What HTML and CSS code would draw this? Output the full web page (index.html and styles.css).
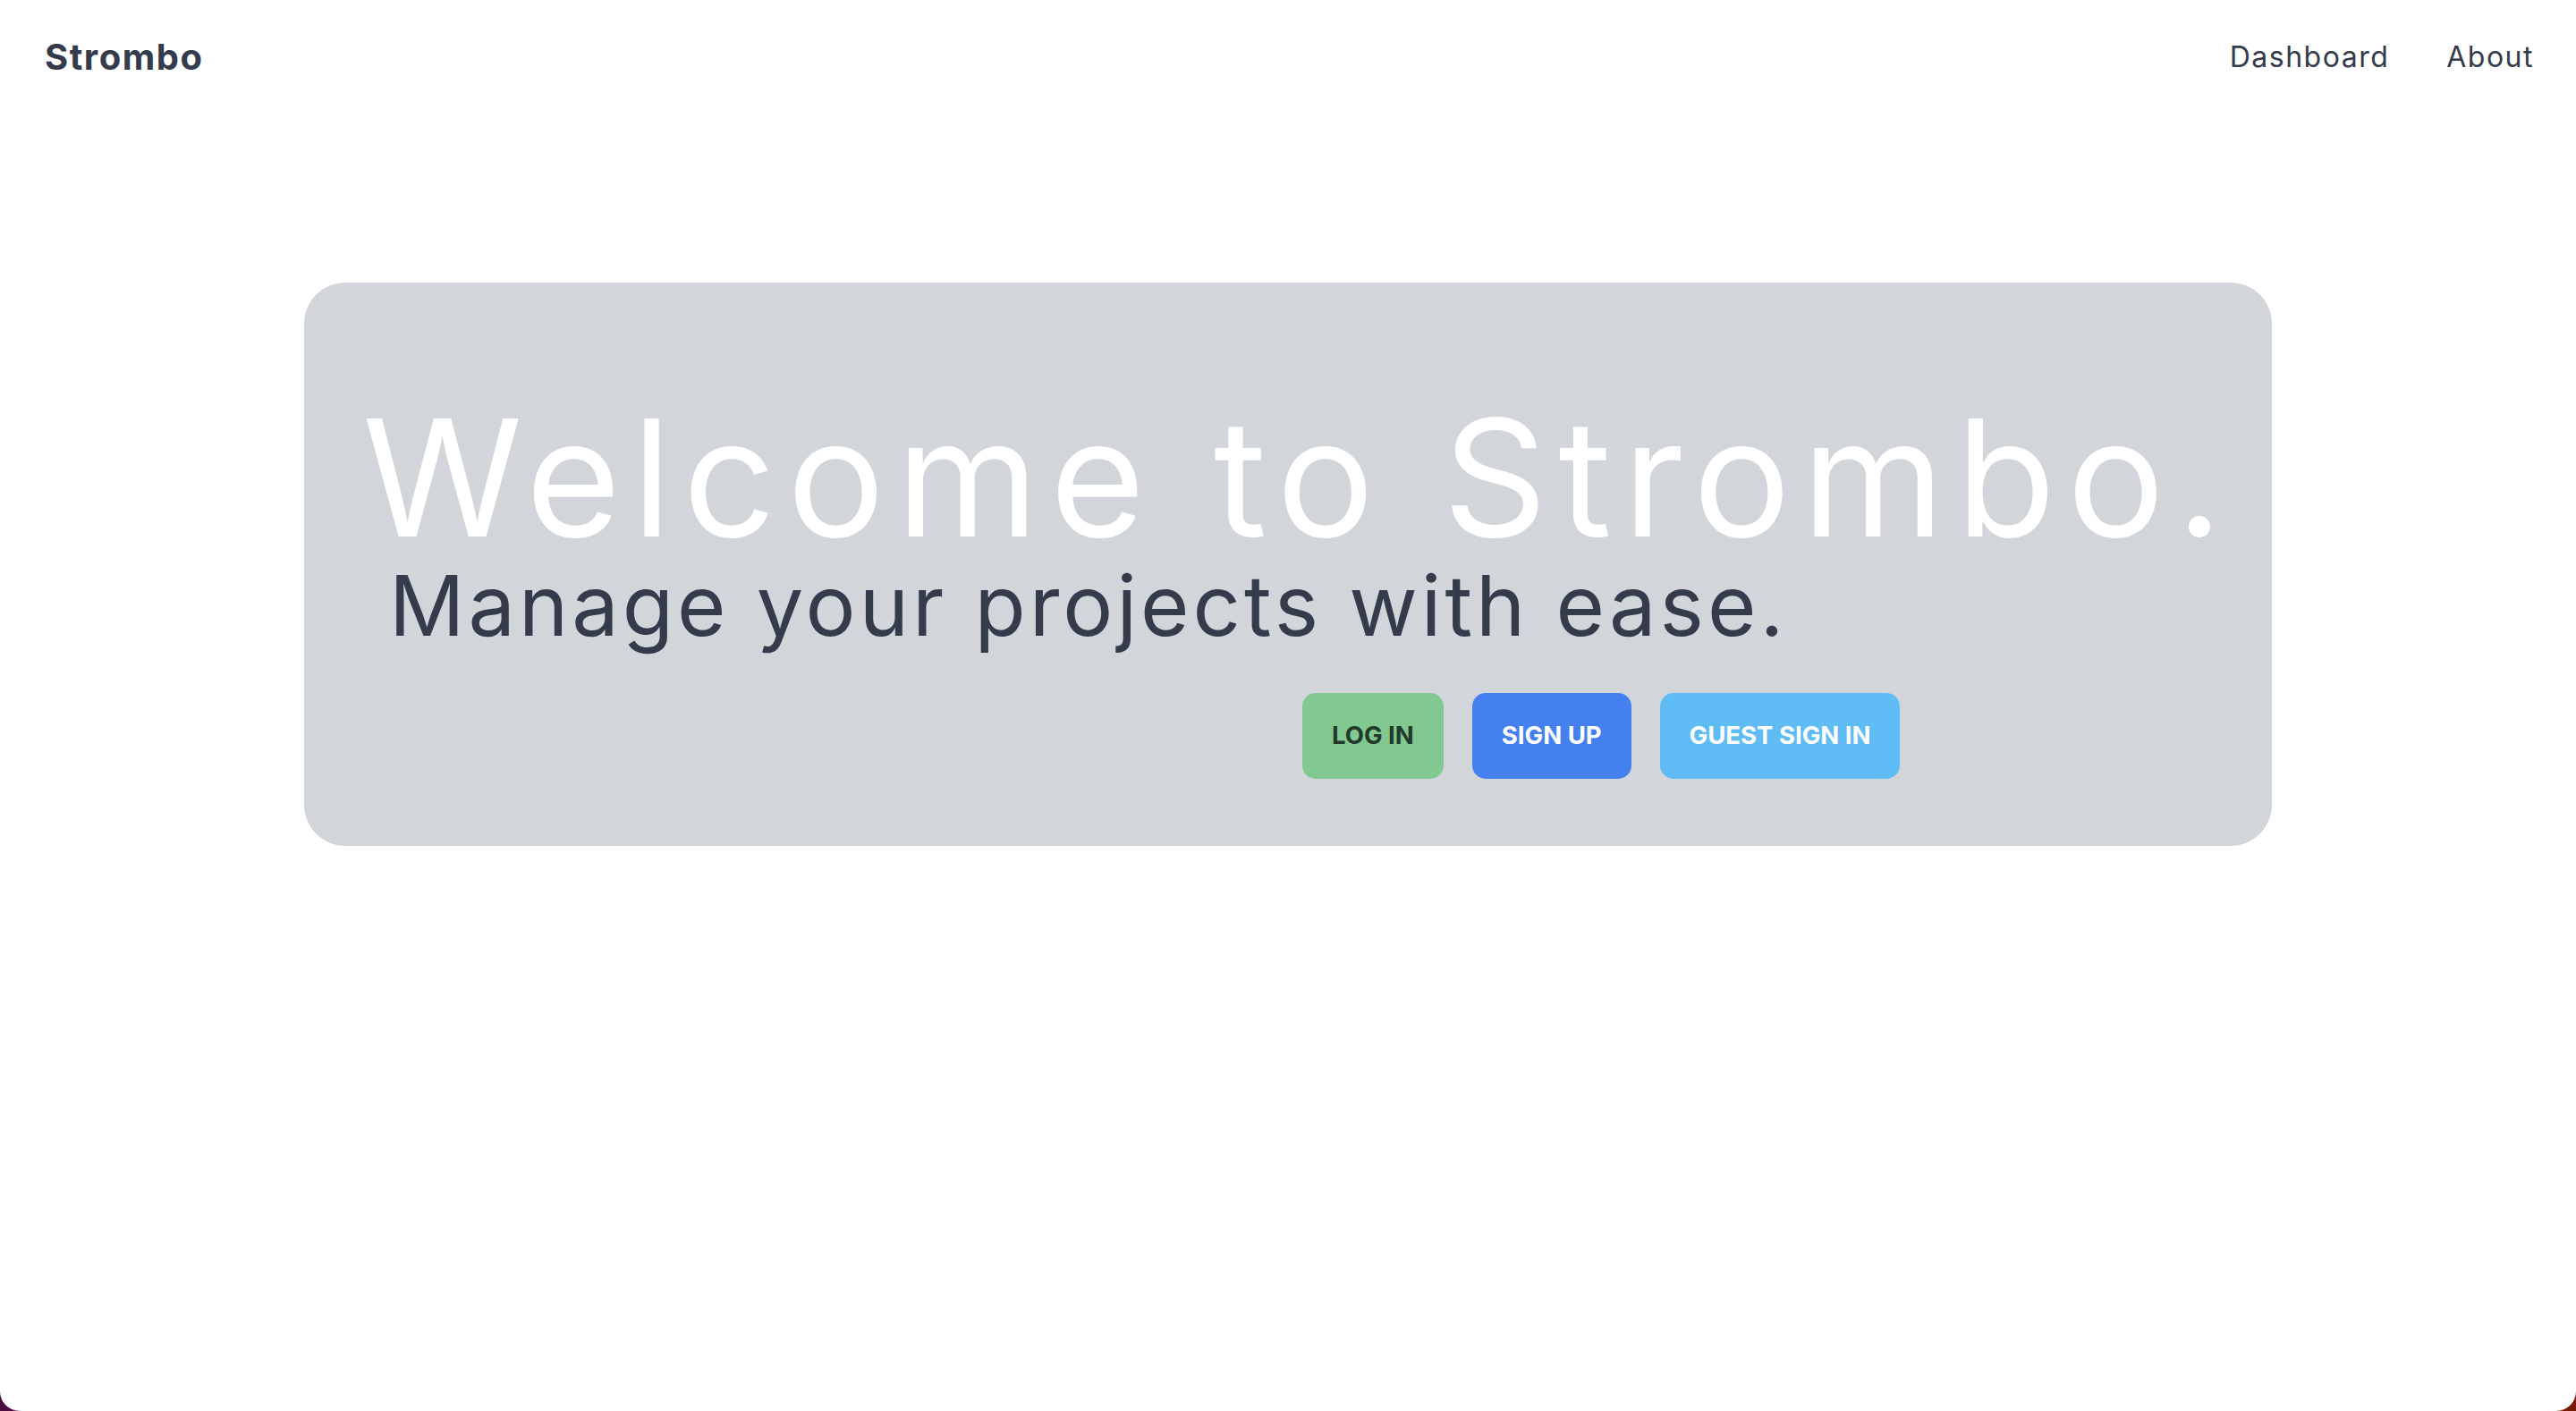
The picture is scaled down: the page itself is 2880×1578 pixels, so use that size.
FILE: index.html
```html
<!DOCTYPE html>
<html lang="en">
<head>
<meta charset="utf-8">
<title>Strombo</title>
<link rel="stylesheet" href="styles.css">
</head>
<body>
<div class="page">
  <nav class="nav">
    <a class="brand" href="#">Strombo</a>
    <div class="nav-links">
      <a class="nav-link" href="#">Dashboard</a>
      <a class="nav-link" href="#">About</a>
    </div>
  </nav>
  <main class="main">
    <section class="hero">
      <h1 class="hero-title">Welcome to Strombo.</h1>
      <h2 class="hero-sub">Manage your projects with ease.</h2>
      <div class="actions">
        <a class="btn btn-login" href="#">LOG IN</a>
        <a class="btn btn-signup" href="#">SIGN UP</a>
        <a class="btn btn-guest" href="#">GUEST SIGN IN</a>
      </div>
    </section>
  </main>
</div>
</body>
</html>
```
FILE: styles.css
```css
html {
  height: 100%;
  background: linear-gradient(90deg, #4b0c3e 0%, #5e1020 50%, #761a03 100%);
}
body {
  margin: 0;
  min-height: 100%;
  font-family: "Inter", "Noto Sans", sans-serif;
  color: #343b4b;
}
.page {
  min-height: 100vh;
  background: #ffffff;
  border-bottom-left-radius: 22px;
  border-bottom-right-radius: 22px;
}
a {
  text-decoration: none;
  color: inherit;
}
.nav {
  height: 127px;
  display: flex;
  align-items: center;
  justify-content: space-between;
  padding: 0 47px 0 50px;
}
.brand {
  font-size: 40px;
  line-height: 1;
  font-weight: 700;
  letter-spacing: 1.5px;
  color: #343b4b;
}
.nav-links {
  display: flex;
  align-items: center;
  gap: 64px;
}
.nav-link {
  font-size: 32px;
  line-height: 1;
  font-weight: 400;
  letter-spacing: 1.5px;
  color: #343b4b;
}
.main {
  display: flex;
  justify-content: center;
  padding-top: 189px;
}
.hero {
  width: 2200px;
  box-sizing: border-box;
  background: #d2d5da;
  border-radius: 46px;
  padding: 127px 65px 75px 65px;
  display: flex;
  flex-direction: column;
}
.hero-title {
  margin: 0;
  font-size: 182px;
  line-height: 1;
  font-weight: 400;
  letter-spacing: 12.7px;
  color: #ffffff;
  white-space: nowrap;
}
.hero-sub {
  margin: 6px 0 0 30px;
  font-size: 93.5px;
  line-height: 1;
  font-weight: 400;
  letter-spacing: 4px;
  color: #343b4b;
  white-space: nowrap;
}
.actions {
  display: flex;
  gap: 32px;
  margin: 50px 0 0 1051px;
}
.btn {
  height: 96px;
  box-sizing: border-box;
  padding: 0 33px;
  display: flex;
  align-items: center;
  justify-content: center;
  border-radius: 15px;
  font-size: 27.5px;
  line-height: 1;
  font-weight: 700;
  color: #ffffff;
  white-space: nowrap;
}
.btn-login {
  background: #81c991;
  color: #223a2a;
}
.btn-signup {
  background: #4580f1;
}
.btn-guest {
  background: #60bcf4;
}
```
